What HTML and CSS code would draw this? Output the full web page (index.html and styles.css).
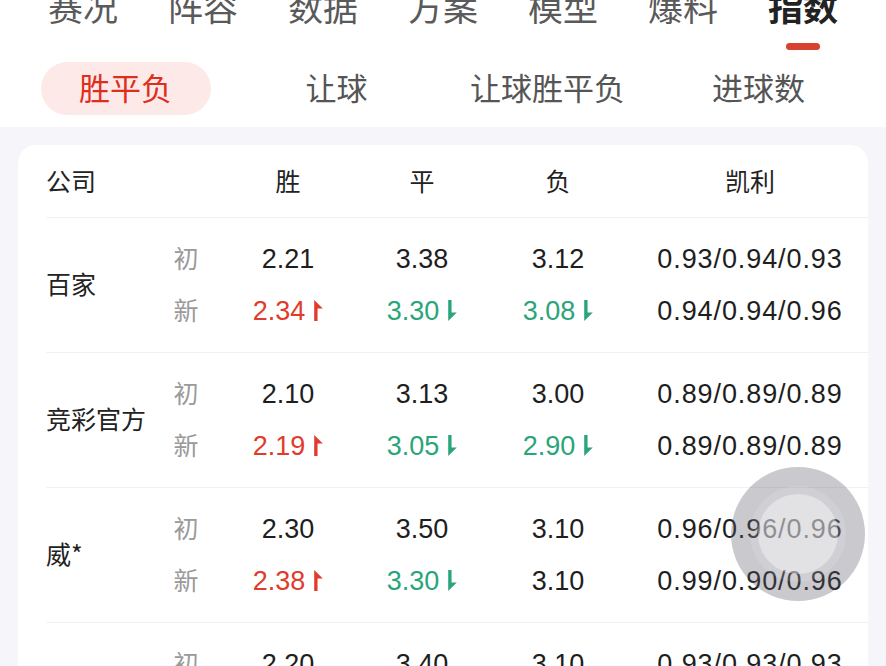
FILE: index.html
```html
<!DOCTYPE html>
<html lang="zh-CN">
<head>
<meta charset="utf-8">
<title>指数</title>
<link rel="stylesheet" href="styles.css">
</head>
<body>
<div class="page">
  <header class="top">
    <nav class="tabs">
      <div class="tab">赛况</div>
      <div class="tab">阵容</div>
      <div class="tab">数据</div>
      <div class="tab">方案</div>
      <div class="tab">模型</div>
      <div class="tab">爆料</div>
      <div class="tab active">指数<span class="bar"></span></div>
    </nav>
    <nav class="subtabs">
      <div class="subtab"><span class="pill">胜平负</span></div>
      <div class="subtab"><span>让球</span></div>
      <div class="subtab"><span>让球胜平负</span></div>
      <div class="subtab"><span>进球数</span></div>
    </nav>
  </header>
  <main class="main">
    <section class="card">
      <div class="head">
        <div class="c-name">公司</div>
        <div></div>
        <div class="c-val">胜</div>
        <div class="c-val">平</div>
        <div class="c-val">负</div>
        <div class="c-val kelly">凯利</div>
      </div>

      <div class="row">
        <div class="c-name">百家</div>
        <div class="lbl">初</div>
        <div class="num">2.21</div>
        <div class="num">3.38</div>
        <div class="num">3.12</div>
        <div class="num kelly">0.93/0.94/0.93</div>
        <div class="lbl">新</div>
        <div class="num up">2.34<svg class="arr" viewBox="0 0 9 22"><path d="M0 0 L9 9 L3.5 9 L3.5 22 L0 22 Z"/></svg></div>
        <div class="num down">3.30<svg class="arr" viewBox="0 0 9 22"><path d="M0 0 L3.5 0 L3.5 13 L9 13 L0 22 Z"/></svg></div>
        <div class="num down">3.08<svg class="arr" viewBox="0 0 9 22"><path d="M0 0 L3.5 0 L3.5 13 L9 13 L0 22 Z"/></svg></div>
        <div class="num kelly">0.94/0.94/0.96</div>
      </div>

      <div class="row">
        <div class="c-name">竞彩官方</div>
        <div class="lbl">初</div>
        <div class="num">2.10</div>
        <div class="num">3.13</div>
        <div class="num">3.00</div>
        <div class="num kelly">0.89/0.89/0.89</div>
        <div class="lbl">新</div>
        <div class="num up">2.19<svg class="arr" viewBox="0 0 9 22"><path d="M0 0 L9 9 L3.5 9 L3.5 22 L0 22 Z"/></svg></div>
        <div class="num down">3.05<svg class="arr" viewBox="0 0 9 22"><path d="M0 0 L3.5 0 L3.5 13 L9 13 L0 22 Z"/></svg></div>
        <div class="num down">2.90<svg class="arr" viewBox="0 0 9 22"><path d="M0 0 L3.5 0 L3.5 13 L9 13 L0 22 Z"/></svg></div>
        <div class="num kelly">0.89/0.89/0.89</div>
      </div>

      <div class="row">
        <div class="c-name">威*</div>
        <div class="lbl">初</div>
        <div class="num">2.30</div>
        <div class="num">3.50</div>
        <div class="num">3.10</div>
        <div class="num kelly">0.96/0.96/0.96</div>
        <div class="lbl">新</div>
        <div class="num up">2.38<svg class="arr" viewBox="0 0 9 22"><path d="M0 0 L9 9 L3.5 9 L3.5 22 L0 22 Z"/></svg></div>
        <div class="num down">3.30<svg class="arr" viewBox="0 0 9 22"><path d="M0 0 L3.5 0 L3.5 13 L9 13 L0 22 Z"/></svg></div>
        <div class="num">3.10</div>
        <div class="num kelly">0.99/0.90/0.96</div>
      </div>

      <div class="row">
        <div class="c-name">立*</div>
        <div class="lbl">初</div>
        <div class="num">2.20</div>
        <div class="num">3.40</div>
        <div class="num">3.10</div>
        <div class="num kelly">0.93/0.93/0.93</div>
        <div class="lbl">新</div>
        <div class="num">2.20</div>
        <div class="num">3.40</div>
        <div class="num">3.10</div>
        <div class="num kelly">0.93/0.93/0.93</div>
      </div>
    </section>
  </main>
  <div class="assist"><div class="ring"><div class="core"></div></div></div>
</div>
</body>
</html>
```

FILE: styles.css
```css
* { box-sizing: border-box; }
html, body {
  margin: 0;
  padding: 0;
  background: #f5f5fa;
  overflow: hidden;
}
body {
  font-family: "Noto Sans CJK SC", "Noto Sans", sans-serif;
  color: #222;
}
.page {
  position: relative;
  width: 886px;
  height: 666px;
  overflow: hidden;
}
.top {
  display: flow-root;
  background: #fff;
  height: 127px;
}
.tabs {
  display: grid;
  grid-template-columns: repeat(7, 120px);
  padding-left: 23px;
  margin-top: -12px;
}
.tab {
  position: relative;
  text-align: center;
  font-size: 35px;
  line-height: 36px;
  height: 36px;
  color: #5a5a5a;
}
.tab.active {
  color: #222;
  font-weight: 700;
}
.bar {
  position: absolute;
  left: 43px;
  top: 55px;
  width: 34px;
  height: 7px;
  border-radius: 4px;
  background: #d8402f;
}
.subtabs {
  display: grid;
  grid-template-columns: repeat(4, 211px);
  padding-left: 20px;
  margin-top: 38px;
}
.subtab {
  display: flex;
  justify-content: center;
  font-size: 31px;
  color: #555;
}
.subtab span {
  display: block;
  height: 53px;
  line-height: 50px;
}
.subtab .pill {
  width: 170px;
  text-align: center;
  border-radius: 27px;
  background: #fde9e8;
  color: #de2e1e;
}
.main {
  padding: 18px 18px 0 18px;
}
.card {
  background: #fff;
  border-radius: 18px;
  padding-left: 28px;
  height: 600px;
}
.head, .row {
  display: grid;
  grid-template-columns: 104px 72px 132px 136px 136px 1fr;
  font-size: 25px;
}
.head {
  height: 72px;
  line-height: 70px;
  color: #222;
}
.row {
  grid-template-rows: 52px 52px;
  border-top: 1px solid #f1f1f4;
  padding: 15px 0;
  line-height: 52px;
}
.row .c-name {
  grid-row: 1 / span 2;
  align-self: center;
  line-height: 30px;
  margin-top: -5px;
  color: #222;
}
.c-val { text-align: center; }
.kelly { padding-left: 6px; text-align: center; }
.lbl {
  text-align: center;
  line-height: 48px;
  color: #9a9a9a;
}
.num {
  font-family: "Liberation Sans", "Noto Sans CJK SC", sans-serif;
  font-size: 27px;
  text-align: center;
  color: #1e1e1e;
}
.num.kelly { letter-spacing: 0.9px; }
.up { color: #e03b2b; }
.down { color: #2aa57a; }
.arr {
  width: 9px;
  height: 21px;
  margin-left: 9px;
  vertical-align: -1px;
  fill: currentColor;
}
.assist {
  position: absolute;
  left: 731px;
  top: 467px;
  width: 134px;
  height: 134px;
  border-radius: 50%;
  background: rgba(95, 92, 105, 0.33);
  display: flex;
  align-items: center;
  justify-content: center;
}
.ring {
  width: 96px;
  height: 96px;
  border-radius: 50%;
  background: rgba(255, 255, 255, 0.12);
  display: flex;
  align-items: center;
  justify-content: center;
}
.core {
  width: 80px;
  height: 80px;
  border-radius: 50%;
  background: rgba(255, 255, 255, 0.38);
}
```
